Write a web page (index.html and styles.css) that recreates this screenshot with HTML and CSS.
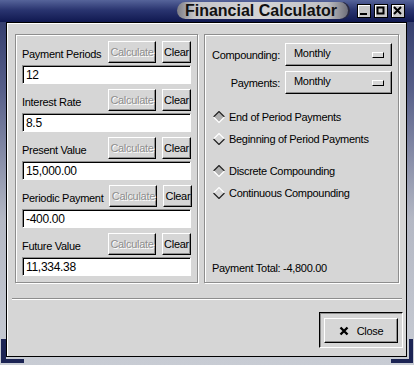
FILE: index.html
```html
<!DOCTYPE html>
<html lang="en">
<head>
    <meta charset="UTF-8">
    <title>Financial Calculator</title>
    <link rel="stylesheet" href="styles.css">
</head>
<body>
    <div class="window">
        <div class="titlebar">
            <div class="title">Financial Calculator</div>
            <div class="wm-buttons">
                <span class="wm-btn">
                    <svg width="10" height="10" viewBox="0 0 10 10"><rect x="1" y="7" width="7" height="2" fill="#000"/></svg>
                </span>
                <span class="wm-btn">
                    <svg width="10" height="10" viewBox="0 0 10 10"><rect x="1.5" y="1.5" width="6" height="6" fill="none" stroke="#000" stroke-width="2"/></svg>
                </span>
                <span class="wm-btn">
                    <svg width="10" height="10" viewBox="0 0 10 10"><path d="M1 1 L8 8 M8 1 L1 8" stroke="#000" stroke-width="2"/></svg>
                </span>
            </div>
        </div>

        <div class="client">
            <div class="panels">
                <div class="group values">
                    <div class="field">
                        <div class="field-head">
                            <span class="label">Payment Periods</span>
                            <button class="btn calc" disabled>Calculate</button>
                            <button class="btn clear">Clear</button>
                        </div>
                        <div class="entry">12</div>
                    </div>
                    <div class="field">
                        <div class="field-head">
                            <span class="label">Interest Rate</span>
                            <button class="btn calc" disabled>Calculate</button>
                            <button class="btn clear">Clear</button>
                        </div>
                        <div class="entry">8.5</div>
                    </div>
                    <div class="field">
                        <div class="field-head">
                            <span class="label">Present Value</span>
                            <button class="btn calc" disabled>Calculate</button>
                            <button class="btn clear">Clear</button>
                        </div>
                        <div class="entry">15,000.00</div>
                    </div>
                    <div class="field">
                        <div class="field-head">
                            <span class="label">Periodic Payment</span>
                            <button class="btn calc" disabled>Calculate</button>
                            <button class="btn clear">Clear</button>
                        </div>
                        <div class="entry">-400.00</div>
                    </div>
                    <div class="field">
                        <div class="field-head">
                            <span class="label">Future Value</span>
                            <button class="btn calc" disabled>Calculate</button>
                            <button class="btn clear">Clear</button>
                        </div>
                        <div class="entry">11,334.38</div>
                    </div>
                </div>

                <div class="group options">
                    <div class="menus">
                        <span class="menu-label">Compounding:</span>
                        <div class="optmenu"><span>Monthly</span><span class="indicator"></span></div>
                        <span class="menu-label">Payments:</span>
                        <div class="optmenu"><span>Monthly</span><span class="indicator"></span></div>
                    </div>

                    <div class="radios first">
                        <div class="radio on">
                            <svg width="12" height="12" viewBox="0 0 12 12"><path d="M6 0.5 L11.5 6 L6 11.5 L0.5 6 Z" fill="#b0b0b0"/><path d="M0.5 6 L6 0.5 L11.5 6" fill="none" stroke="#222" stroke-width="1.2"/><path d="M0.5 6 L6 11.5 L11.5 6" fill="none" stroke="#fff" stroke-width="1.2"/></svg>
                            <span>End of Period Payments</span>
                        </div>
                        <div class="radio">
                            <svg width="12" height="12" viewBox="0 0 12 12"><path d="M6 0.5 L11.5 6 L6 11.5 L0.5 6 Z" fill="#d6d6d6"/><path d="M0.5 6 L6 0.5 L11.5 6" fill="none" stroke="#fff" stroke-width="1.2"/><path d="M0.5 6 L6 11.5 L11.5 6" fill="none" stroke="#222" stroke-width="1.2"/></svg>
                            <span>Beginning of Period Payments</span>
                        </div>
                    </div>

                    <div class="radios second">
                        <div class="radio on">
                            <svg width="12" height="12" viewBox="0 0 12 12"><path d="M6 0.5 L11.5 6 L6 11.5 L0.5 6 Z" fill="#b0b0b0"/><path d="M0.5 6 L6 0.5 L11.5 6" fill="none" stroke="#222" stroke-width="1.2"/><path d="M0.5 6 L6 11.5 L11.5 6" fill="none" stroke="#fff" stroke-width="1.2"/></svg>
                            <span>Discrete Compounding</span>
                        </div>
                        <div class="radio">
                            <svg width="12" height="12" viewBox="0 0 12 12"><path d="M6 0.5 L11.5 6 L6 11.5 L0.5 6 Z" fill="#d6d6d6"/><path d="M0.5 6 L6 0.5 L11.5 6" fill="none" stroke="#fff" stroke-width="1.2"/><path d="M0.5 6 L6 11.5 L11.5 6" fill="none" stroke="#222" stroke-width="1.2"/></svg>
                            <span>Continuous Compounding</span>
                        </div>
                    </div>

                    <div class="total">Payment Total: -4,800.00</div>
                </div>
            </div>

            <div class="separator"></div>

            <div class="actions">
                <div class="default-frame">
                    <button class="btn close">
                        <svg width="10" height="10" viewBox="0 0 10 10"><path d="M1.5 1.5 L8.5 8.5 M8.5 1.5 L1.5 8.5" stroke="#000" stroke-width="2.4"/></svg>
                        <span>Close</span>
                    </button>
                </div>
            </div>
        </div>
    </div>
</body>
</html>
```

FILE: styles.css
```css
body {
    margin: 0;
    background: #c8ccd4;
}
.window {
    position: relative;
    width: 414px;
    height: 365px;
    box-sizing: border-box;
    padding: 0 7px 8px 6px;
    display: flex;
    flex-direction: column;
    background: linear-gradient(to bottom, #2a3466 0%, #58608a 25%, #b4b8c4 60%, #c8ccd4 100%);
    font-family: "Liberation Sans", Arial, sans-serif;
    font-size: 11px;
    letter-spacing: -0.3px;
    color: #000;
    overflow: hidden;
    white-space: nowrap;
}
/* bottom frame corners */
.window::before,
.window::after {
    content: "";
    position: absolute;
    bottom: 2px;
    width: 18px;
    height: 20px;
    border-bottom: 4px solid #1c2454;
}
.window::before {
    left: 1px;
    border-left: 5px solid #1c2454;
}
.window::after {
    right: 1px;
    border-right: 4px solid #1c2454;
}

/* title bar */
.titlebar {
    height: 22px;
    margin: 0 -7px 0 -6px;
    display: flex;
    align-items: center;
    justify-content: flex-end;
    padding-right: 9px;
    gap: 9px;
    background: linear-gradient(to bottom, #56649a 0%, #2a3570 45%, #101850 100%);
}
.title {
    height: 17px;
    margin-top: -1px;
    padding: 0 11px 0 8px;
    border-radius: 9px;
    background: linear-gradient(to right, #7c7c84 0%, #c4c4c8 10%, #d4d4d6 50%, #c0c0c4 88%, #6e6e78 100%);
    box-shadow: 2px 0 0 #2a2a40;
    font-weight: bold;
    font-size: 16px;
    letter-spacing: 0;
    line-height: 17px;
    color: #111;
}
.wm-buttons {
    display: flex;
    gap: 3px;
}
.wm-btn {
    width: 12px;
    height: 12px;
    border: 1px solid #000;
    background: #c8c8c8;
    box-shadow: inset 1px 1px #fff;
    display: flex;
    align-items: center;
    justify-content: center;
}

/* client area */
.client {
    flex: 1;
    background: #d6d6d6;
    border: 1px solid #000;
    box-shadow: inset 1px 1px #fff;
    padding: 11px 7px 0 8px;
    display: flex;
    flex-direction: column;
}
.panels {
    display: flex;
    gap: 6px;
    height: 249px;
}
.group {
    box-sizing: border-box;
    border: 1px solid #8e8e8e;
    box-shadow: inset 1px 1px #fff, 1px 1px #fff;
}
.values {
    width: 183px;
    padding: 6px 6px 0 6px;
    display: flex;
    flex-direction: column;
    gap: 5px;
}
.field-head {
    display: flex;
    align-items: center;
    height: 22px;
    gap: 6px;
}
.label {
    flex: 1;
    padding-top: 3px;
}
.btn {
    box-sizing: border-box;
    flex-shrink: 0;
    height: 22px;
    padding: 0;
    border: 1px solid;
    border-color: #fff #000 #000 #fff;
    box-shadow: inset -1px -1px #8e8e8e;
    background: #d6d6d6;
    font-family: inherit;
    font-size: 11px;
    letter-spacing: -0.3px;
    color: #000;
}
.calc {
    width: 48px;
    color: #8e8e8e;
    text-shadow: 1px 1px #fff;
}
.clear {
    width: 29px;
}
.entry {
    box-sizing: border-box;
    height: 19px;
    margin-top: 2px;
    padding: 2px 3px;
    background: #fff;
    border: 1px solid;
    border-color: #8e8e8e #fff #fff #8e8e8e;
    box-shadow: inset 1px 1px #000;
    font-size: 12px;
    line-height: 14px;
}

.options {
    width: 195px;
    padding: 8px 8px 7px 7px;
    display: flex;
    flex-direction: column;
}
.menus {
    display: grid;
    grid-template-columns: 1fr 107px;
    column-gap: 5px;
    row-gap: 5px;
    align-items: center;
}
.menu-label {
    text-align: right;
}
.optmenu {
    box-sizing: border-box;
    height: 23px;
    padding: 0 7px 3px 8px;
    border: 1px solid;
    border-color: #fff #000 #000 #fff;
    box-shadow: inset -1px -1px #8e8e8e;
    display: flex;
    align-items: center;
    justify-content: space-between;
}
.indicator {
    box-sizing: border-box;
    width: 12px;
    height: 6px;
    margin-top: 3px;
    border: 1px solid;
    border-color: #fff #000 #000 #fff;
    background: #d6d6d6;
}
.radios.first {
    margin-top: 12px;
}
.radios.second {
    margin-top: 10px;
}
.radio {
    height: 22px;
    display: flex;
    align-items: center;
    gap: 4px;
    padding-left: 1px;
}
.total {
    margin-top: auto;
    line-height: 14px;
}

.separator {
    margin: 15px -3px 0 -3px;
    border-top: 1px solid #8e8e8e;
    border-bottom: 1px solid #fff;
}
.actions {
    display: flex;
    justify-content: flex-end;
    margin: 12px -4px 0 0;
}
.default-frame {
    box-sizing: border-box;
    width: 84px;
    height: 36px;
    padding: 5px 4px 4px 4px;
    border: 1px solid;
    border-color: #000 #fff #fff #000;
    box-shadow: inset 1px 1px #8e8e8e;
}
.close {
    width: 74px;
    height: 25px;
    display: flex;
    align-items: center;
    justify-content: center;
    gap: 8px;
}
```
